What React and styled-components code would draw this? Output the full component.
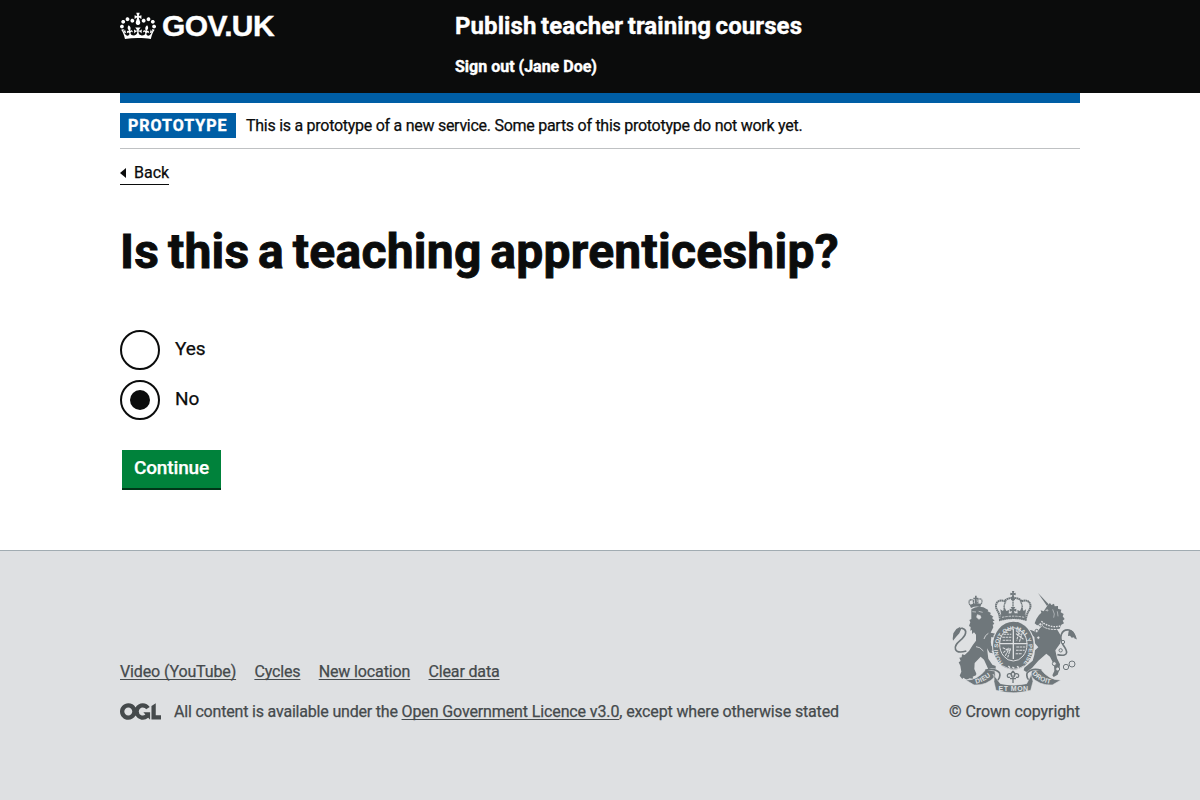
import React, { useState } from 'react';
import styled, { createGlobalStyle } from 'styled-components';

const colors = {
  black: '#0b0c0c',
  blue: '#005ea5',
  green: '#00823b',
  footer: '#dee0e2',
  footerText: '#454a4c',
  crest: '#6f777b',
};

const GlobalStyle = createGlobalStyle`
  body {
    margin: 0;
    background: ${colors.footer};
    color: ${colors.black};
    font-family: Roboto, "Liberation Sans", sans-serif;
    font-size: 16px;
    line-height: 20px;
    -webkit-text-stroke: 0.25px currentColor;
  }
  *, *::before, *::after { box-sizing: border-box; }
  svg text { -webkit-text-stroke: 0; }
`;

const Page = styled.div`
  display: flex;
  flex-direction: column;
  height: 800px;
  overflow: hidden;
`;

const Container = styled.div`
  width: 960px;
  margin: 0 auto;
`;

const Header = styled.header`
  height: 93px;
  background: ${colors.black};
  color: #fff;
  font-weight: 700;
  -webkit-text-stroke: 0.4px #fff;
`;

const HeaderInner = styled(Container)`
  display: flex;
`;

const LogoLink = styled.a`
  display: flex;
  width: 335px;
  padding-top: 11px;
  color: #fff;
  text-decoration: none;
`;

const LogoText = styled.span`
  margin: 0 0 0 6px;
  font-family: "Liberation Sans", Arial, sans-serif;
  font-size: 30px;
  line-height: 30px;
  letter-spacing: -0.6px;
`;

const HeaderContent = styled.div`
  display: flex;
  flex-direction: column;
  gap: 16px;
  padding-top: 11px;
`;

const ServiceName = styled.a`
  color: #fff;
  font-size: 24px;
  line-height: 30px;
  letter-spacing: 0.09px;
  word-spacing: -1.6px;
  white-space: nowrap;
`;

const Main = styled.div`
  flex: none;
  height: 457px;
  background: #fff;
`;

const PhaseBanner = styled.div`
  display: flex;
  align-items: flex-start;
  height: 56px;
  padding-top: 10px;
  border-top: 10px solid ${colors.blue};
  border-bottom: 1px solid #bfc1c3;
`;

const Tag = styled.strong`
  width: 116px;
  height: 25px;
  margin-right: 10px;
  padding-left: 8px;
  background: ${colors.blue};
  color: #fff;
  letter-spacing: 1px;
  line-height: 25px;
  -webkit-text-stroke: 0.4px #fff;
`;

const Text = styled.span`
  letter-spacing: ${(p) => p.$track || 0}px;
  line-height: ${(p) => p.$line || 20}px;
  white-space: pre;
`;

const BackLink = styled.a`
  display: inline-flex;
  align-items: center;
  gap: 8px;
  height: 22px;
  margin-top: 14px;
  padding-bottom: 2px;
  border-bottom: 1px solid ${colors.black};
  line-height: 19px;
`;

const Heading = styled.h1`
  margin: 42px 0 53px;
  font-size: 48px;
  font-weight: 700;
  line-height: 50px;
  letter-spacing: 0.26px;
  word-spacing: -3.5px;
  -webkit-text-stroke: 0.9px ${colors.black};
`;

const RadioGroup = styled.div`
  display: flex;
  flex-direction: column;
  gap: 10px;
`;

const RadioLabel = styled.label`
  display: flex;
  align-items: center;
  gap: 15px;
  height: 40px;
  font-size: 19px;
  cursor: pointer;
`;

const RadioInput = styled.input`
  display: grid;
  place-content: center;
  width: 40px;
  height: 40px;
  margin: 0;
  appearance: none;
  border: 2px solid ${colors.black};
  border-radius: 50%;

  &:checked::before {
    content: '';
    width: 20px;
    height: 20px;
    border-radius: 50%;
    background: ${colors.black};
  }
`;

const RadioText = styled.span`
  padding-bottom: 3px;
  letter-spacing: -0.1px;
`;

const Button = styled.button`
  display: block;
  width: 99px;
  height: 38px;
  margin: 30px 0 0 2px;
  padding: 0 0 2px;
  border: 0;
  background: ${colors.green};
  box-shadow: 0 2px 0 #003618;
  color: #fff;
  font: 500 19px/36px Roboto, sans-serif;
  letter-spacing: -0.15px;
`;

const Footer = styled.footer`
  flex: 1;
  border-top: 1px solid #a1acb2;
  background: ${colors.footer};
  color: ${colors.footerText};
`;

const FooterInner = styled(Container)`
  display: flex;
  justify-content: space-between;
  padding-top: 39px;
`;

const FooterMeta = styled.div`
  padding-top: 72px;
`;

const FooterLinks = styled.nav`
  display: flex;
  gap: 18.3px;
`;

const FooterLink = styled.a`
  color: ${colors.footerText};
  letter-spacing: ${(p) => p.$track}px;
  text-decoration: underline;
  text-decoration-skip-ink: none;
  text-decoration-thickness: 1px;
  text-underline-offset: 2px;
  white-space: nowrap;
`;

const Licence = styled.div`
  display: flex;
  align-items: flex-start;
  margin-top: 20px;

  svg { margin-top: 1px; }
`;

const LicenceCopy = styled.span`
  margin-left: 13px;
`;

const Copyright = styled.a`
  display: flex;
  flex-direction: column;
  align-items: flex-end;
`;

const CrestSvg = styled.svg`
  display: block;
  margin-right: 3px;
`;

const CopyrightText = styled.span`
  margin-top: 9px;
  letter-spacing: -0.09px;
  white-space: nowrap;
`;

function Crown() {
  return (
    <svg width="36" height="30" viewBox="0 0 132 97" preserveAspectRatio="xMidYMid meet" fill="#fff" aria-hidden="true">
      <path fillRule="evenodd" d="M25 30.2c3.5 1.5 7.7-.2 9.1-3.7 1.5-3.6-.2-7.8-3.9-9.2-3.6-1.4-7.6.3-9.1 3.9-1.4 3.5.3 7.5 3.9 9zM9 39.5c3.6 1.5 7.8-.2 9.2-3.7 1.5-3.6-.2-7.8-3.9-9.1-3.6-1.5-7.6.2-9.1 3.8-1.4 3.5.3 7.5 3.8 9zM4.4 57.2c3.5 1.5 7.7-.2 9.1-3.8 1.5-3.6-.2-7.7-3.9-9.1-3.5-1.5-7.6.3-9.1 3.8-1.4 3.5.3 7.6 3.9 9.1zm38.3-21.4c3.5 1.5 7.7-.2 9.1-3.8 1.5-3.6-.2-7.7-3.9-9.1-3.6-1.5-7.6.3-9.1 3.8-1.3 3.6.4 7.7 3.9 9.1zm64.4-5.6c-3.6 1.5-7.8-.2-9.1-3.7-1.5-3.6.2-7.8 3.8-9.2 3.6-1.4 7.7.3 9.2 3.9 1.3 3.5-.4 7.5-3.9 9zm15.9 9.3c-3.6 1.5-7.7-.2-9.1-3.7-1.5-3.6.2-7.8 3.7-9.1 3.6-1.5 7.7.2 9.2 3.8 1.5 3.5-.3 7.5-3.8 9zm4.7 17.7c-3.6 1.5-7.8-.2-9.2-3.8-1.5-3.6.2-7.7 3.9-9.1 3.6-1.5 7.7.3 9.2 3.8 1.3 3.5-.4 7.6-3.9 9.1zM89.3 35.8c-3.6 1.5-7.8-.2-9.2-3.8-1.4-3.6.2-7.7 3.9-9.1 3.6-1.5 7.7.3 9.2 3.8 1.4 3.6-.3 7.7-3.9 9.1zM69.7 17.7l8.9 4.7V9.3l-8.9 2.8c-.2-.3-.5-.6-.9-.9L72.4 0H59.6l3.5 11.2c-.3.3-.6.5-.9.9l-8.8-2.8v13.1l8.8-4.7c.3.3.6.7.9.9l-5 15.4v.1c-.2.8-.4 1.6-.4 2.4 0 4.1 3.1 7.5 7 8.1h.2c.3 0 .7.1 1 .1.4 0 .7 0 1-.1h.2c4-.6 7.1-4.1 7.1-8.1 0-.8-.1-1.7-.4-2.4V34l-5.1-15.4c.4-.2.7-.6 1-.9zM66 92.8c16.9 0 32.8 1.1 47.1 3.2 4-16.9 8.9-26.7 14-33.5l-9.6-3.4c1 4.9 1.1 7.2 0 10.2-1.5-1.4-3-4.3-4.2-8.7L108.6 76c2.8-2 5-3.2 7.5-3.3-4.4 9.4-10 11.9-13.6 11.2-4.3-.8-6.3-4.6-5.6-7.9 1-4.7 5.7-5.9 8-.5 4.3-8.7-3-11.4-7.6-8.8 7.1-7.2 7.9-13.5 2.1-21.1-8 6.1-8.1 12.3-4.5 20.8-4.7-5.4-12.1-2.5-9.5 6.2 3.4-5.2 7.9-2 7.2 3.1-.6 4.3-6.4 7.8-13.5 7.2-10.3-.9-10.9-8-11.2-13.8 2.5-.5 7.1 1.8 11 7.3L80.2 60c-4.1 4.4-8 5.3-12.3 5.4 1.4-4.4 8-11.6 8-11.6H55.5s6.4 7.2 7.9 11.6c-4.2-.1-8-1-12.3-5.4l1.4 16.4c3.9-5.5 8.5-7.7 10.9-7.3-.3 5.8-.9 12.8-11.1 13.8-7.2.6-12.9-2.9-13.5-7.2-.7-5 3.8-8.3 7.1-3.1 2.7-8.7-4.6-11.6-9.4-6.2 3.7-8.5 3.6-14.7-4.6-20.8-5.8 7.6-5 13.9 2.2 21.1-4.7-2.6-11.9.1-7.7 8.8 2.3-5.5 7.1-4.2 8.1.5.7 3.3-1.3 7.1-5.7 7.9-3.5.7-9-1.8-13.5-11.2 2.5.1 4.7 1.3 7.5 3.3l-4.7-15.4c-1.2 4.4-2.7 7.2-4.3 8.7-1.1-3-.9-5.3 0-10.2l-9.5 3.4c5 6.9 9.9 16.7 14 33.5 14.8-2.1 30.8-3.2 47.7-3.2z" />
    </svg>
  );
}

function OglLogo() {
  return (
    <svg width="41" height="17" viewBox="0 0 483.2 195.7" fill={colors.footerText} aria-hidden="true">
      <path d="M421.5 142.8V.1l-50.7 32.3v161.1h112.4v-50.7zm-122.3-9.6A47.12 47.12 0 0 1 221 97.8c0-26 21.1-47.1 47.1-47.1 16.7 0 31.4 8.7 39.7 21.8l42.7-27.2A97.63 97.63 0 0 0 268.1 0c-36.5 0-68.3 20.1-85.1 49.7A98 98 0 0 0 97.8 0C43.9 0 0 43.9 0 97.8s43.9 97.8 97.8 97.8c36.5 0 68.3-20.1 85.1-49.7a97.76 97.76 0 0 0 149.6 25.4l19.4 22.2h3v-87.8h-80l24.3 27.5zM97.8 145c-26 0-47.1-21.1-47.1-47.1s21.1-47.1 47.1-47.1 47.1 21.1 47.1 47.1S123.8 145 97.8 145" />
    </svg>
  );
}

function Crest() {
  const c = colors.crest;
  const bg = colors.footer;
  return (
    <CrestSvg width="125" height="103" viewBox="36 30 375 309" fill={c} aria-hidden="true">
      {/* lion crown */}
      <path d="M93 84l-4-9q16-9 35-3l-3 9q-14-4-28 3z" />
      <path d="M90 75c-8-13 2-20 12-13M123 72c8-12-1-20-11-13M101 72l-1-10M113 70l1-9" stroke={c} strokeWidth="4" fill="none" strokeDasharray="4 1" />
      <path d="M105 47h5v6h5v4h-5l1 14h-6l-1-14h-4v-4h5z" />
      {/* lion */}
      <path d="M94 88q15-11 36-6l8 4 7 4-2 4 10 5-3 4 10 7-4 4 8 8-6 2 5 8-5 2 2 8-8 16 20 4-2 5-10-1 6 8-12-3q-3 16 0 26l9 9-2 8-7-2 5 8-10-2-8-13 4 31 12 18 10 4v8l-13-2-9 4-13-29-10-9-18 19-1 18 6 14-1 5-10 4 2 7-11-2-9 4-10-6-3 4-8-10 5-12-3-18-5-10 6-4-4-10 7-1 1-9 8 2q16-12 24-29l10-14 0-18-6-7-6 5 0-12-5 2 1-11-5-3 4-11-3-7 6-3z" />
      <path d="M97 95l11 1M116 94l12 3M112 104l-2 8 7 6 6-5-2-6z" stroke={bg} strokeWidth="2" fill={bg} />
      <path d="M145 160q-10 5-13 17M108 200q12 0 22 13" stroke={bg} strokeWidth="2.5" fill="none" />
      {/* lion tail */}
      <path d="M79 213C40 224 38 200 60 182c18-15 24-32 7-37-12-2-18 9-24 26" stroke={c} strokeWidth="5" fill="none" />
      <path d="M38 177l2-17 9-13 12-7-3 7 7-3-7 16-10 11-9 11-1-8z" />
      {/* royal crown */}
      <path d="M173 93c-13-20 1-38 21-29 8-14 43-14 51 0 20-9 35 9 21 29q-6 10-9 26-38-10-77 1-1-17-7-27z" fill="none" stroke={c} strokeWidth="6" strokeDasharray="5 1" />
      <path d="M181 103q38-7 76 0v17q-38-9-76 0z" />
      <path d="M183 103l-2-15 8 5 5-11 5 11 8-3-1 13zM233 103l-1-13 8 3 5-11 6 11 7-5-2 15z" />
      <path d="M198 64q-8 12-5 25M241 64q8 12 5 25M219 60v30" fill="none" stroke={c} strokeWidth="4" strokeDasharray="4 1" />
      <path d="M186 112q34-7 67 0" stroke={bg} strokeWidth="2.4" strokeDasharray="7 3" fill="none" />
      <path d="M216 33h7l-2 7 6-2v8l-6-2 2 9q6 7-4 9-10-2-4-9l2-9-6 2v-8l6 2zM212 81h14l-4 7 7-2v9l-7-2 3 11h-12l3-11-7 2v-9l7 2z" />
      {/* unicorn */}
      <path d="M294 39l32 34-5 5z" />
      <path d="M323 76l7-7 4 6 8-4 2 8 10-1 0 8 10 3-2 8 9 5-3 7 6 8-6 5 4 8-8 4-5 12-8 2 12 20-2 22-15 21 5 24 9 18-2 16-5 15-12 7-4-5 6-13-1-19-12-24-11-9-24 21-19 22-17 12-8-5 2-8 25-21 5-17 2-14 10-9-10-12-2-19-7-6-10 8-16 0-8 5-5-6 8-7 11-3-18-8-5-7 4-6 12 5 26 5 17 7 6-11 10-11 4-8-11 6-10 2-7-6 5-13 8-12 7-7-2-7 9 3z" />
      <path d="M317 91l6-2 1 4zM338 88l5 14-2 11M352 94l2 15" stroke={bg} strokeWidth="1.6" fill="none" />
      <path d="M304 124q27 22 57 14" stroke={bg} strokeWidth="4" strokeDasharray="5 3" fill="none" />
      <path d="M302 132q13 19 54 16" stroke={bg} strokeWidth="3" strokeDasharray="7 2" fill="none" />
      <path d="M352 224c40 8 28-14 18-28-15-24-6-49 17-46 11 2 15 13 20 26" stroke={c} strokeWidth="5" fill="none" />
      <path d="M411 179l-8-7-8 1-5-6-6 1 1-9 2-10 12 5 6 9z" />
      {/* unicorn chain */}
      <g fill={bg} stroke={c} strokeWidth="3">
        <circle cx="301" cy="133" r="5" /><circle cx="290" cy="153" r="5" /><circle cx="295" cy="173" r="5" />
        <circle cx="369" cy="186" r="5" /><circle cx="362" cy="211" r="5" /><circle cx="343" cy="251" r="6" />
        <circle cx="353" cy="267" r="6" /><circle cx="378" cy="261" r="8" /><circle cx="396" cy="252" r="9" />
      </g>
      {/* garter and shield */}
      <ellipse cx="220" cy="197" rx="64" ry="75" fill={bg} />
      <ellipse cx="220" cy="197" rx="61" ry="72" />
      <ellipse cx="220" cy="193" rx="41" ry="50" fill="none" stroke={bg} strokeWidth="3" />
      <path id="garterCurve" d="M190 250A46 57 0 1 1 250 250" fill="none" />
      <text fill={bg} fontFamily="Liberation Sans, sans-serif" fontWeight="700" fontSize="17">
        <textPath href="#garterCurve" textLength="256" lengthAdjust="spacingAndGlyphs">HONI SOIT QUI MAL Y PENSE</textPath>
      </text>
      <path d="M220 146v91M179 191h83" stroke={bg} strokeWidth="4" />
      <path d="M190 163h24M187 172h27M188 181h25M201 151h12M228 152l17 15M228 161l24 18M238 151l-8 31M247 158l-9 28M229 201h27M228 211h26M227 221h20M188 203l22 10M190 218l16-14M196 227l12-22M203 232l9-27" stroke={bg} strokeWidth="3.2" strokeDasharray="8 2" fill="none" />
      <path d="M187 257q35 22 66 0" stroke={bg} strokeWidth="2.5" fill="none" />
      <path d="M205 258l5 5M217 261l6 4M231 259l6 4" stroke={bg} strokeWidth="4" />
      {/* motto ribbon */}
      <path d="M77 300q35 1 60-31l28 4 1 16q-26 29-64 26z" stroke={bg} strokeWidth="2" />
      <path d="M363 300q-35 1-60-31l-28 4-3 16q27 29 65 26z" stroke={bg} strokeWidth="2" />
      <path d="M136 271q28-8 42 7 5 11-5 23M304 271q-28-8-42 7-5 11 5 23" fill="none" stroke={c} strokeWidth="5" />
      <path d="M159 282q5 8 3 23l6 26q51 14 104 0l7-27-5-21q-5 13-14 28-38 9-79 0-13-17-22-29z" stroke={bg} strokeWidth="1.5" />
      <path d="M219 273q9 9 3 18M219 273q-9 9-3 18M222 292c-1-14 14-14 14-5 0 6-5 6-8 4M216 292c1-14-14-14-14-5 0 6 5 6 8 4M210 296h18M219 290v19" fill="none" stroke={c} strokeWidth="4" />
      <g fill={bg} fontFamily="Liberation Sans, sans-serif" fontWeight="700" fontSize="21" textAnchor="middle">
        <path id="mottoLeft" d="M108 311q27-5 54-32" fill="none" />
        <path id="mottoRight" d="M276 281q24 27 60 31" fill="none" />
        <text fontSize="20" textAnchor="start"><textPath href="#mottoLeft" textLength="51">DIEU</textPath></text>
        <text x="220" y="333" textLength="89">ET MON</text>
        <text fontSize="20" textAnchor="start"><textPath href="#mottoRight" textLength="64">DROIT</textPath></text>
      </g>
    </CrestSvg>
  );
}

const footerLinks = [
  { label: 'Video (YouTube)', track: -0.13 },
  { label: 'Cycles', track: -0.15 },
  { label: 'New location', track: -0.13 },
  { label: 'Clear data', track: -0.15 },
];

export default function App() {
  const [answer, setAnswer] = useState('No');
  return (
    <>
      <GlobalStyle />
      <Page>
        <Header>
          <HeaderInner>
            <LogoLink>
              <Crown />
              <LogoText>GOV.UK</LogoText>
            </LogoLink>
            <HeaderContent>
              <ServiceName>Publish teacher training courses</ServiceName>
              <Text>Sign out (Jane Doe)</Text>
            </HeaderContent>
          </HeaderInner>
        </Header>
        <Main>
          <Container>
            <PhaseBanner>
              <Tag>PROTOTYPE</Tag>
              <Text $track={-0.27} $line={26}>
                This is a prototype of a new service. Some parts of this prototype do not work yet.
              </Text>
            </PhaseBanner>
            <BackLink>
              <svg width="6" height="10" viewBox="0 0 6 10" aria-hidden="true"><path d="M0 5l6-5v10z" fill={colors.black} /></svg>
              <span>Back</span>
            </BackLink>
            <Heading>Is this a teaching apprenticeship?</Heading>
            <RadioGroup>
              {['Yes', 'No'].map((value) => (
                <RadioLabel key={value}>
                  <RadioInput type="radio" name="apprenticeship" checked={answer === value} onChange={() => setAnswer(value)} />
                  <RadioText>{value}</RadioText>
                </RadioLabel>
              ))}
            </RadioGroup>
            <Button>Continue</Button>
          </Container>
        </Main>
        <Footer>
          <FooterInner>
            <FooterMeta>
              <FooterLinks>
                {footerLinks.map(({ label, track }) => <FooterLink key={label} $track={track}>{label}</FooterLink>)}
              </FooterLinks>
              <Licence>
                <OglLogo />
                <LicenceCopy>
                  <Text $track={-0.19}>{'All content is available under the '}</Text>
                  <FooterLink $track={-0.12}>Open Government Licence v3.0</FooterLink>
                  <Text $track={-0.15}>, except where otherwise stated</Text>
                </LicenceCopy>
              </Licence>
            </FooterMeta>
            <Copyright>
              <Crest />
              <CopyrightText>© Crown copyright</CopyrightText>
            </Copyright>
          </FooterInner>
        </Footer>
      </Page>
    </>
  );
}
